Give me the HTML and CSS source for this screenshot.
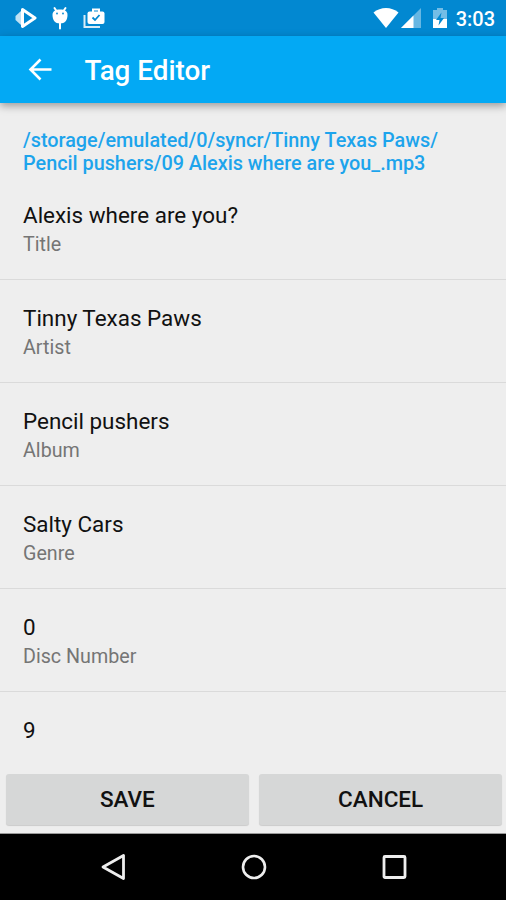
FILE: index.html
```html
<!DOCTYPE html>
<html lang="en">
<head>
  <meta charset="UTF-8" />
  <meta name="viewport" content="width=device-width, initial-scale=1.0" />
  <title>Tag Editor</title>
  <link rel="stylesheet" href="styles.css">
</head>
<body>
  <div class="screen">
    <div class="status-bar">
      <div class="notifications">
        <svg width="22" height="22" viewBox="0 0 22 22">
          <path d="M6 4v14L.5 13v-4z" fill="#fff" opacity=".75" />
          <path d="M7.500 2.500l12.500 8.500-12.500 8.500z" fill="none" stroke="#fff" stroke-width="3" stroke-linejoin="round" />
        </svg>
        <svg width="18" height="24" viewBox="0 0 18 24">
          <path d="M3.500 2l2 3M14.500 2l-2 3M9 15v7.500" stroke="#fff" stroke-width="2" stroke-linecap="round" />
          <path d="M1.500 9c0-4 3-5.500 7.500-5.500S16.500 5 16.500 9c0 5-2.500 8.500-7.500 8.500S1.500 14 1.500 9z" fill="#fff" />
          <circle cx="6" cy="7.500" r=".9" fill="#0288d1" />
          <circle cx="12" cy="7.500" r=".9" fill="#0288d1" />
        </svg>
        <svg width="24" height="22" viewBox="0 0 24 22">
          <path d="M1.500 8v12h15.500" fill="none" stroke="#fff" stroke-width="2" opacity=".85" />
          <path d="M10 5V2.500h6V5" fill="none" stroke="#fff" stroke-width="2" />
          <rect x="4.500" y="4.500" width="17" height="12.500" rx="2" fill="#fff" />
          <path d="M9.500 10.500l2.500 2.500 4.500-5" fill="none" stroke="#0288d1" stroke-width="1.800" />
        </svg>
      </div>
      <div class="system">
        <svg width="26" height="20" viewBox="0 0 26 20">
          <path d="M13 20L.5 4.500C4 1.500 8.500 0 13 0s9 1.500 12.500 4.500z" fill="#fff" />
        </svg>
        <svg class="signal" width="20" height="20" viewBox="0 0 20 20">
          <path d="M20 0v20H0z" fill="#fff" opacity=".4" />
          <path d="M12.500 7.500V20H0z" fill="#fff" />
        </svg>
        <svg class="battery" width="14" height="20" viewBox="0 0 14 20">
          <path d="M4 0h6v2h4v9H0V2h4z" fill="#fff" opacity=".45" />
          <path d="M0 11h14v9H0z" fill="#fff" />
          <path d="M8.500 4.500L3 12h3.500l-1 5.500L11 10H7.500z" fill="#0288d1" />
        </svg>
        <span class="clock">3:03</span>
      </div>
    </div>

    <div class="toolbar">
      <svg width="24" height="24" viewBox="0 0 24 24">
        <path d="M12.500 1.500L2.500 11.500l10 10M2.500 11.500H23.500" fill="none" stroke="#fff" stroke-width="2.600" />
      </svg>
      <h1>Tag Editor</h1>
    </div>

    <div class="content">
      <p class="path">/storage/emulated/0/syncr/Tinny Texas Paws/<br>Pencil pushers/09 Alexis where are you_.mp3</p>
      <div class="row">
        <div class="value">Alexis where are you?</div>
        <div class="label">Title</div>
      </div>
      <div class="row">
        <div class="value">Tinny Texas Paws</div>
        <div class="label">Artist</div>
      </div>
      <div class="row">
        <div class="value">Pencil pushers</div>
        <div class="label">Album</div>
      </div>
      <div class="row">
        <div class="value">Salty Cars</div>
        <div class="label">Genre</div>
      </div>
      <div class="row">
        <div class="value">0</div>
        <div class="label">Disc Number</div>
      </div>
      <div class="row">
        <div class="value">9</div>
      </div>
    </div>

    <div class="buttons">
      <button>SAVE</button>
      <button>CANCEL</button>
    </div>

    <div class="nav-bar">
      <svg width="26" height="28" viewBox="0 0 26 28">
        <path d="M22.500 2.500v23L2 14z" fill="none" stroke="#eee" stroke-width="2.800" stroke-linejoin="round" />
      </svg>
      <svg width="26" height="28" viewBox="0 0 26 28">
        <circle cx="13" cy="14" r="11" fill="none" stroke="#eee" stroke-width="2.600" />
      </svg>
      <svg width="26" height="28" viewBox="0 0 26 28">
        <rect x="3" y="3.500" width="21" height="21" rx="1" fill="none" stroke="#eee" stroke-width="2.800" />
      </svg>
    </div>
  </div>
</body>
</html>
```
FILE: styles.css
```css
body {
  margin: 0;
  font-family: Roboto, sans-serif;
  background: #eee;
}
.screen {
  display: flex;
  flex-direction: column;
  height: 900px;
  overflow: hidden;
}
svg {
  display: block;
  flex: none;
}
.status-bar {
  display: flex;
  justify-content: space-between;
  height: 36px;
  padding: 0 11px 0 15px;
  background: #0288d1;
  box-sizing: border-box;
}
.notifications,
.system {
  display: flex;
  align-items: center;
}
.notifications {
  gap: 14px;
}
.signal {
  margin-left: 2px;
}
.battery {
  margin: 0 9px 0 12px;
}
.clock {
  color: #fff;
  font-size: 20px;
  font-weight: 500;
  line-height: 38px;
  padding-top: 2px;
}
.toolbar {
  display: flex;
  align-items: center;
  height: 67px;
  padding-left: 28px;
  background: #03a9f4;
  box-sizing: border-box;
  box-shadow: 0 3px 8px rgba(0,0,0,0.35);
  z-index: 1;
}
h1 {
  margin: 2px 0 0 32.500px;
  color: #fff;
  font-size: 27.800px;
  font-weight: 500;
}
.content {
  height: 648px;
  padding-top: 26px;
  overflow: hidden;
  box-sizing: border-box;
}
.path {
  margin: 0 0 0 23px;
  color: #1da4ec;
  font-size: 19.820px;
  font-weight: 500;
  line-height: 23px;
  white-space: nowrap;
}
.row {
  height: 103px;
  padding: 24px 23px 0;
  border-bottom: 1px solid #dadada;
  box-sizing: border-box;
}
.path + .row {
  height: 105px;
  padding-top: 26px;
}
.value {
  color: #111;
  font-size: 22.450px;
  line-height: 28px;
}
.label {
  padding-top: 2px;
  color: #757575;
  font-size: 19.700px;
  line-height: 28px;
}
.buttons {
  display: flex;
  gap: 10.500px;
  height: 83px;
  padding: 23px 4px 8px 6px;
  border-bottom: 1px solid #999;
  box-sizing: border-box;
}
button {
  flex: 1;
  padding: 0 0 1px;
  border: none;
  border-radius: 3px;
  background: #d6d7d7;
  box-shadow: 0 1px 1px rgba(0,0,0,0.15);
  color: #111;
  font-family: Roboto, sans-serif;
  font-size: 22.500px;
  font-weight: 500;
}
.nav-bar {
  display: flex;
  align-items: center;
  justify-content: center;
  gap: 114px;
  height: 66px;
  padding-left: 1px;
  background: #000;
}
```
